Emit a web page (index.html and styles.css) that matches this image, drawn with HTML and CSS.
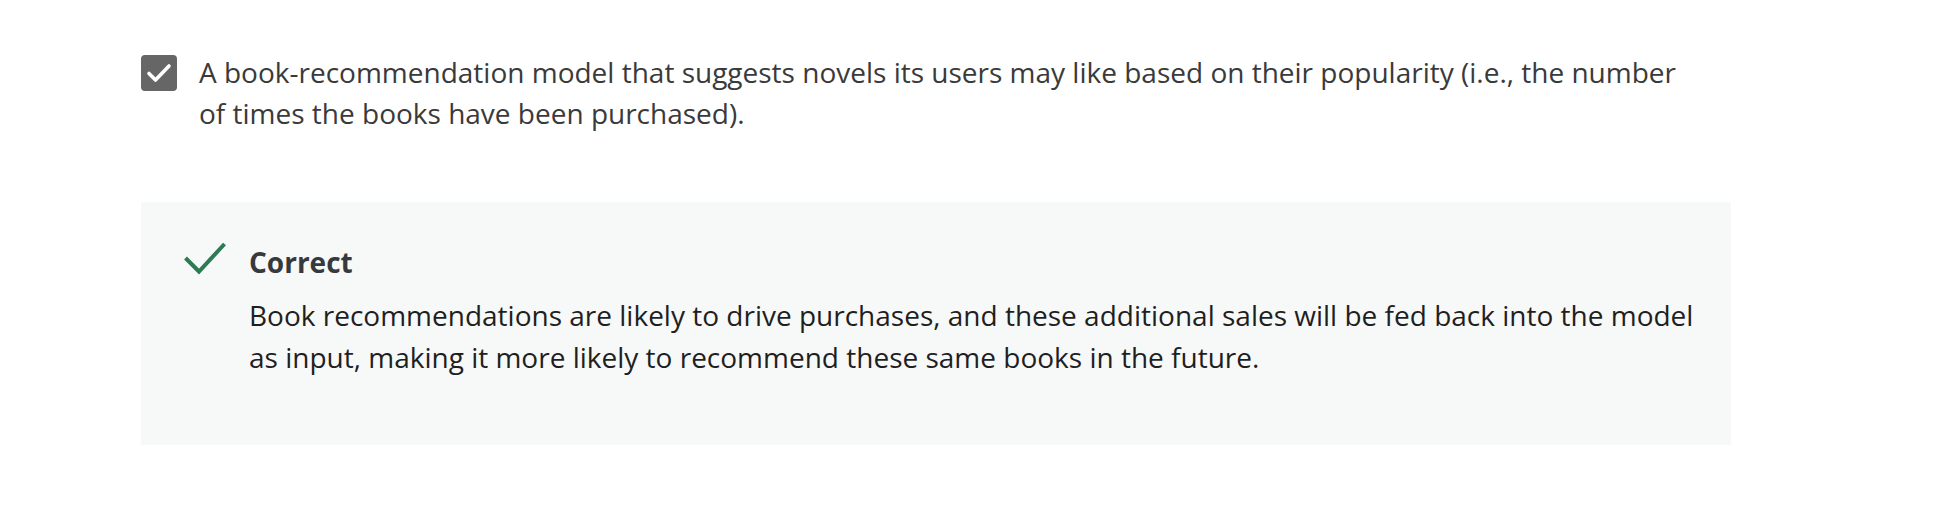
FILE: index.html
```html
<!DOCTYPE html>
<html lang="en">
<head>
<meta charset="utf-8">
<title>Quiz option</title>
<link rel="stylesheet" href="styles.css">
</head>
<body>
<div class="page">
  <div class="option">
    <span class="checkbox">
      <svg width="36" height="36" viewBox="0 0 36 36" aria-hidden="true">
        <rect x="0" y="0" width="36" height="36" rx="4" fill="#666666"/>
        <path d="M8 18.5 L14.5 25 L28 11" fill="none" stroke="#ffffff" stroke-width="3.6" stroke-linecap="round" stroke-linejoin="round"/>
      </svg>
    </span>
    <p class="option-text">A book-recommendation model that suggests novels its users may like based on their popularity (i.e., the number of times the books have been purchased).</p>
  </div>
  <div class="feedback">
    <span class="feedback-icon">
      <svg width="42" height="33" viewBox="0 0 42 33" aria-hidden="true">
        <path d="M1.5 16 L15 29.5 L40.5 2" fill="none" stroke="#2e7a52" stroke-width="4"/>
      </svg>
    </span>
    <div class="feedback-body">
      <div class="feedback-title">Correct</div>
      <p class="feedback-text">Book recommendations are likely to drive purchases, and these additional sales will be fed back into the model as input, making it more likely to recommend these same books in the future.</p>
    </div>
  </div>
</div>
</body>
</html>
```

FILE: styles.css
```css
html, body {
  margin: 0;
  padding: 0;
  background: #ffffff;
}

body {
  font-family: "Open Sans", "Liberation Sans", sans-serif;
}

.page {
  padding: 55px 0 0 141px;
}

.option {
  display: flex;
  align-items: flex-start;
  gap: 22px;
  width: 1560px;
}

.checkbox {
  flex: none;
  width: 36px;
  height: 36px;
  display: block;
}

.checkbox svg {
  display: block;
}

.option-text {
  margin: -3px 0 0 0;
  font-size: 28px;
  line-height: 41px;
  color: #3a3a3a;
}

.feedback {
  margin-top: 68px;
  width: 1590px;
  height: 243px;
  box-sizing: border-box;
  background: #f7f9f9;
  display: flex;
  align-items: flex-start;
  padding: 39px 30px 0 43px;
  gap: 23px;
}

.feedback-icon {
  flex: none;
  width: 42px;
  height: 33px;
  margin-top: 1px;
  display: block;
}

.feedback-icon svg {
  display: block;
}

.feedback-body {
  flex: 1;
}

.feedback-title {
  font-size: 28px;
  font-weight: 700;
  line-height: 42px;
  color: #373a3c;
}

.feedback-text {
  margin: 11px 0 0 0;
  font-size: 28px;
  line-height: 42px;
  color: #1f1f1f;
}
```
